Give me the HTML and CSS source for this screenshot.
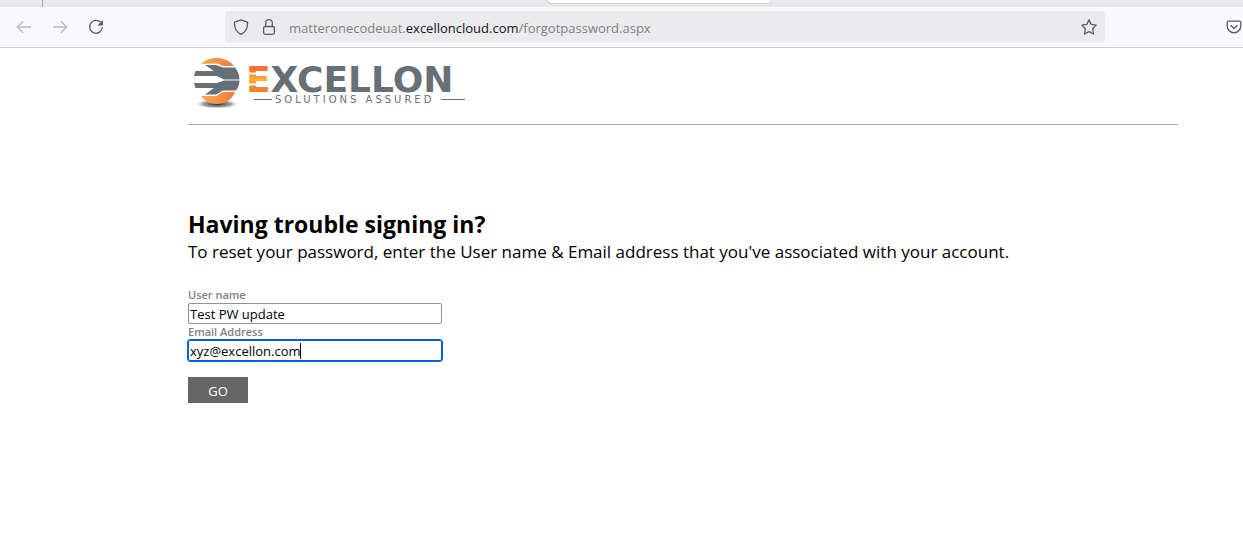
FILE: index.html
```html
<!DOCTYPE html>
<html lang="en">
<head>
  <meta charset="UTF-8" />
  <meta name="viewport" content="width=device-width, initial-scale=1" />
  <title>Forgot Password</title>
  <link rel="stylesheet" href="styles.css">
</head>

<body>
  <!-- Browser bar -->
  <div class="tab-strip">
    <div class="tab-pinned"></div>
    <div class="tab-active"></div>
  </div>

  <nav class="toolbar">
    <div class="nav-buttons">
      <button type="button" class="icon-btn" aria-label="Back" disabled>
        <svg width="16" height="16" viewBox="0 0 16 16"><path d="M15 8H1.5M7 2.2L1.3 8L7 13.8" /></svg>
      </button>
      <button type="button" class="icon-btn" aria-label="Forward" disabled>
        <svg width="16" height="16" viewBox="0 0 16 16"><path d="M1 8h13.5M9 2.2L14.7 8L9 13.8" /></svg>
      </button>
      <button type="button" class="icon-btn" aria-label="Reload">
        <svg width="16" height="16" viewBox="0 0 16 16"><path d="M12.6 3.3A6.4 6.4 0 1 0 14.4 8.3" /><path class="solid" d="M15 1v5.5H9.5z" /></svg>
      </button>
    </div>

    <div class="url-bar">
      <svg width="16" height="16" viewBox="0 0 16 16"><path d="M8 .8L14.5 3.2C14.9 9 12.5 13.3 8 15.3C3.5 13.3 1.1 9 1.5 3.2Z" stroke-linejoin="round" /></svg>
      <svg width="16" height="16" viewBox="0 0 16 16"><rect x="2.6" y="7.5" width="10.8" height="7.8" rx="1.5" /><path d="M4.7 7.5V4a3.3 3.3 0 0 1 6.6 0v3.5" /></svg>
      <div class="url">matteronecodeuat.<b>excelloncloud.com</b>/forgotpassword.aspx</div>
      <button type="button" class="icon-btn" aria-label="Bookmark this page">
        <svg width="16" height="16" viewBox="0 0 16 16"><path d="M8 .9L10.2 5.4L15.2 6.1L11.7 9.8L12.5 15L8 12.7L3.5 15L4.3 9.8L.8 6.1L5.8 5.4Z" stroke-linejoin="round" /></svg>
      </button>
    </div>

    <div class="nav-extra">
      <button type="button" class="icon-btn" aria-label="Save to Pocket">
        <svg width="16" height="16" viewBox="0 0 16 16"><path d="M2.5 2.2h11a1.3 1.3 0 0 1 1.3 1.3V7a6.8 6.8 0 0 1-13.6 0V3.5a1.3 1.3 0 0 1 1.3-1.3zM4.5 6.2L8 9.5L11.5 6.2" stroke-linejoin="round" /></svg>
      </button>
    </div>
  </nav>

  <header class="site-header">
    <svg class="logo" width="284" height="54" viewBox="0 0 284 54" role="img" aria-label="Excellon Solutions Assured">
      <defs>
        <linearGradient id="orange" x1="0" y1="0" x2="1" y2="0">
          <stop offset="0" stop-color="#f9ad55" />
          <stop offset="1" stop-color="#ee7d35" />
        </linearGradient>
        <radialGradient id="shadow">
          <stop offset="0" stop-color="#222" />
          <stop offset="0.6" stop-color="#777" stop-opacity="0.7" />
          <stop offset="1" stop-color="#fff" stop-opacity="0" />
        </radialGradient>
        <linearGradient id="bars" x1="0" y1="0" x2="0" y2="1">
          <stop offset="0.3" stop-color="#f37435" />
          <stop offset="0.5" stop-color="#fbb040" />
          <stop offset="0.7" stop-color="#f58233" />
        </linearGradient>
      </defs>
      <!-- globe -->
      <ellipse cx="29" cy="48" rx="23" ry="5" fill="url(#shadow)" />
      <path d="M13 8C21 0 37 0 45 9L46 10H35L29 7.5Z" fill="url(#orange)" />
      <path d="M6 20L7.5 15H26L17 9H28L35 11.5H47Q51.500 17 51.500 23.500H36L29 20Z" fill="#667076" />
      <path d="M6 27L7.500 32H26L17 38.500H28L35 34.500H48Q51.500 30 51.500 24.500H36L29 27Z" fill="#667076" />
      <path d="M13 40H28L35 36H47C44 44 37 48 29 48C22 48 16 45 13 40Z" fill="url(#orange)" />
      <!-- wordmark -->
      <text x="58" y="36" class="logo-name"><tspan fill="url(#bars)">E</tspan>XCELLON</text>
      <path d="M60 17.5H81M60 28.5H81" stroke="#fff" stroke-width="2" />
      <path d="M66 43.5H84M253 43.5H277" stroke="#667076" />
      <text x="87" y="47" class="logo-tagline">SOLUTIONS ASSURED</text>
    </svg>
  </header>

  <main class="content">
    <h1>Having trouble signing in?</h1>
    <p>To reset your password, enter the User name &amp; Email address that you've associated with your account.</p>

    <form class="reset-form">
      <label for="username">User name</label>
      <input type="text" id="username" value="Test PW update">
      <label for="email">Email Address</label>
      <div class="field">
        <input type="text" id="email" class="active" value="xyz@excellon.com">
        <span class="caret"></span>
      </div>
      <button type="button" class="go-btn">GO</button>
    </form>
  </main>
</body>
</html>
```
FILE: styles.css
```css
* {
  box-sizing: border-box;
}

body {
  margin: 0;
  background: #fff;
  color: #000;
  font-family: 'Segoe UI', 'Open Sans', 'Noto Sans', sans-serif;
}

/* Browser bar */
.tab-strip {
  display: flex;
  height: 7px;
  background: #e9e9eb;
}

.tab-pinned {
  width: 43px;
  margin-right: 505px;
  border-right: 1px solid #a5a5a8;
}

.tab-active {
  width: 223px;
  height: 3px;
  background: #fff;
  border-radius: 0 0 4px 4px;
  box-shadow: 0 0 2px #888;
}

.toolbar {
  display: flex;
  align-items: center;
  height: 41px;
  background: #f9f9fb;
  border-bottom: 1px solid #ccccce;
}

.nav-buttons {
  display: flex;
  gap: 20px;
  width: 225px;
  padding-left: 16px;
}

.nav-extra {
  width: 138px;
  padding-left: 121px;
}

.icon-btn {
  display: flex;
  padding: 0;
  border: none;
  background: none;
}

.icon-btn:disabled {
  opacity: 0.4;
}

.toolbar svg {
  flex: none;
  fill: none;
  stroke: #5b5b66;
  stroke-width: 1.3;
}

.toolbar .solid {
  fill: #5b5b66;
  stroke: none;
}

.url-bar {
  display: flex;
  flex: 1;
  align-items: center;
  gap: 12px;
  height: 32px;
  padding: 0 8px;
  background: #ebebed;
  border-radius: 4px;
}

.url {
  flex: 1;
  padding-top: 1px;
  color: #808084;
  font-size: 13px;
  white-space: nowrap;
}

.url b {
  color: #15141a;
  font-weight: 400;
}

/* Header */
.site-header {
  height: 77px;
  margin: 0 65px 0 188px;
  padding-top: 8px;
  border-bottom: 1px solid #aaa;
}

.logo {
  display: block;
}

.logo-name {
  fill: #667076;
  font-family: 'DejaVu Sans', sans-serif;
  font-size: 36px;
  font-weight: 700;
}

.logo-tagline {
  fill: #667076;
  font-family: 'DejaVu Sans', sans-serif;
  font-size: 10px;
  letter-spacing: 3px;
}

/* Content */
.content {
  margin: 0 65px 0 188px;
  padding-top: 84px;
}

h1 {
  margin: 0;
  font-size: 23px;
  line-height: 30px;
}

p {
  margin: 0;
  font-size: 17px;
  line-height: 26px;
}

.reset-form {
  display: flex;
  flex-direction: column;
  align-items: flex-start;
  padding-top: 22px;
}

label {
  color: #808080;
  font-size: 11px;
  font-weight: 600;
  line-height: 16px;
}

input {
  display: block;
  width: 254px;
  height: 21px;
  padding: 0 1px;
  border: 1px solid #8f8f9d;
  border-radius: 2px;
  font-family: inherit;
  font-size: 13px;
}

.field {
  position: relative;
}

input.active {
  border-color: #0060df;
  outline: 1px solid #0060df;
}

.caret {
  position: absolute;
  top: 3px;
  left: 112px;
  width: 1px;
  height: 16px;
  background: #000;
}

.go-btn {
  width: 60px;
  height: 26px;
  margin-top: 16px;
  padding: 2px 0 0;
  border: none;
  background: #666;
  color: #fff;
  font-family: inherit;
  font-size: 13px;
}
```
